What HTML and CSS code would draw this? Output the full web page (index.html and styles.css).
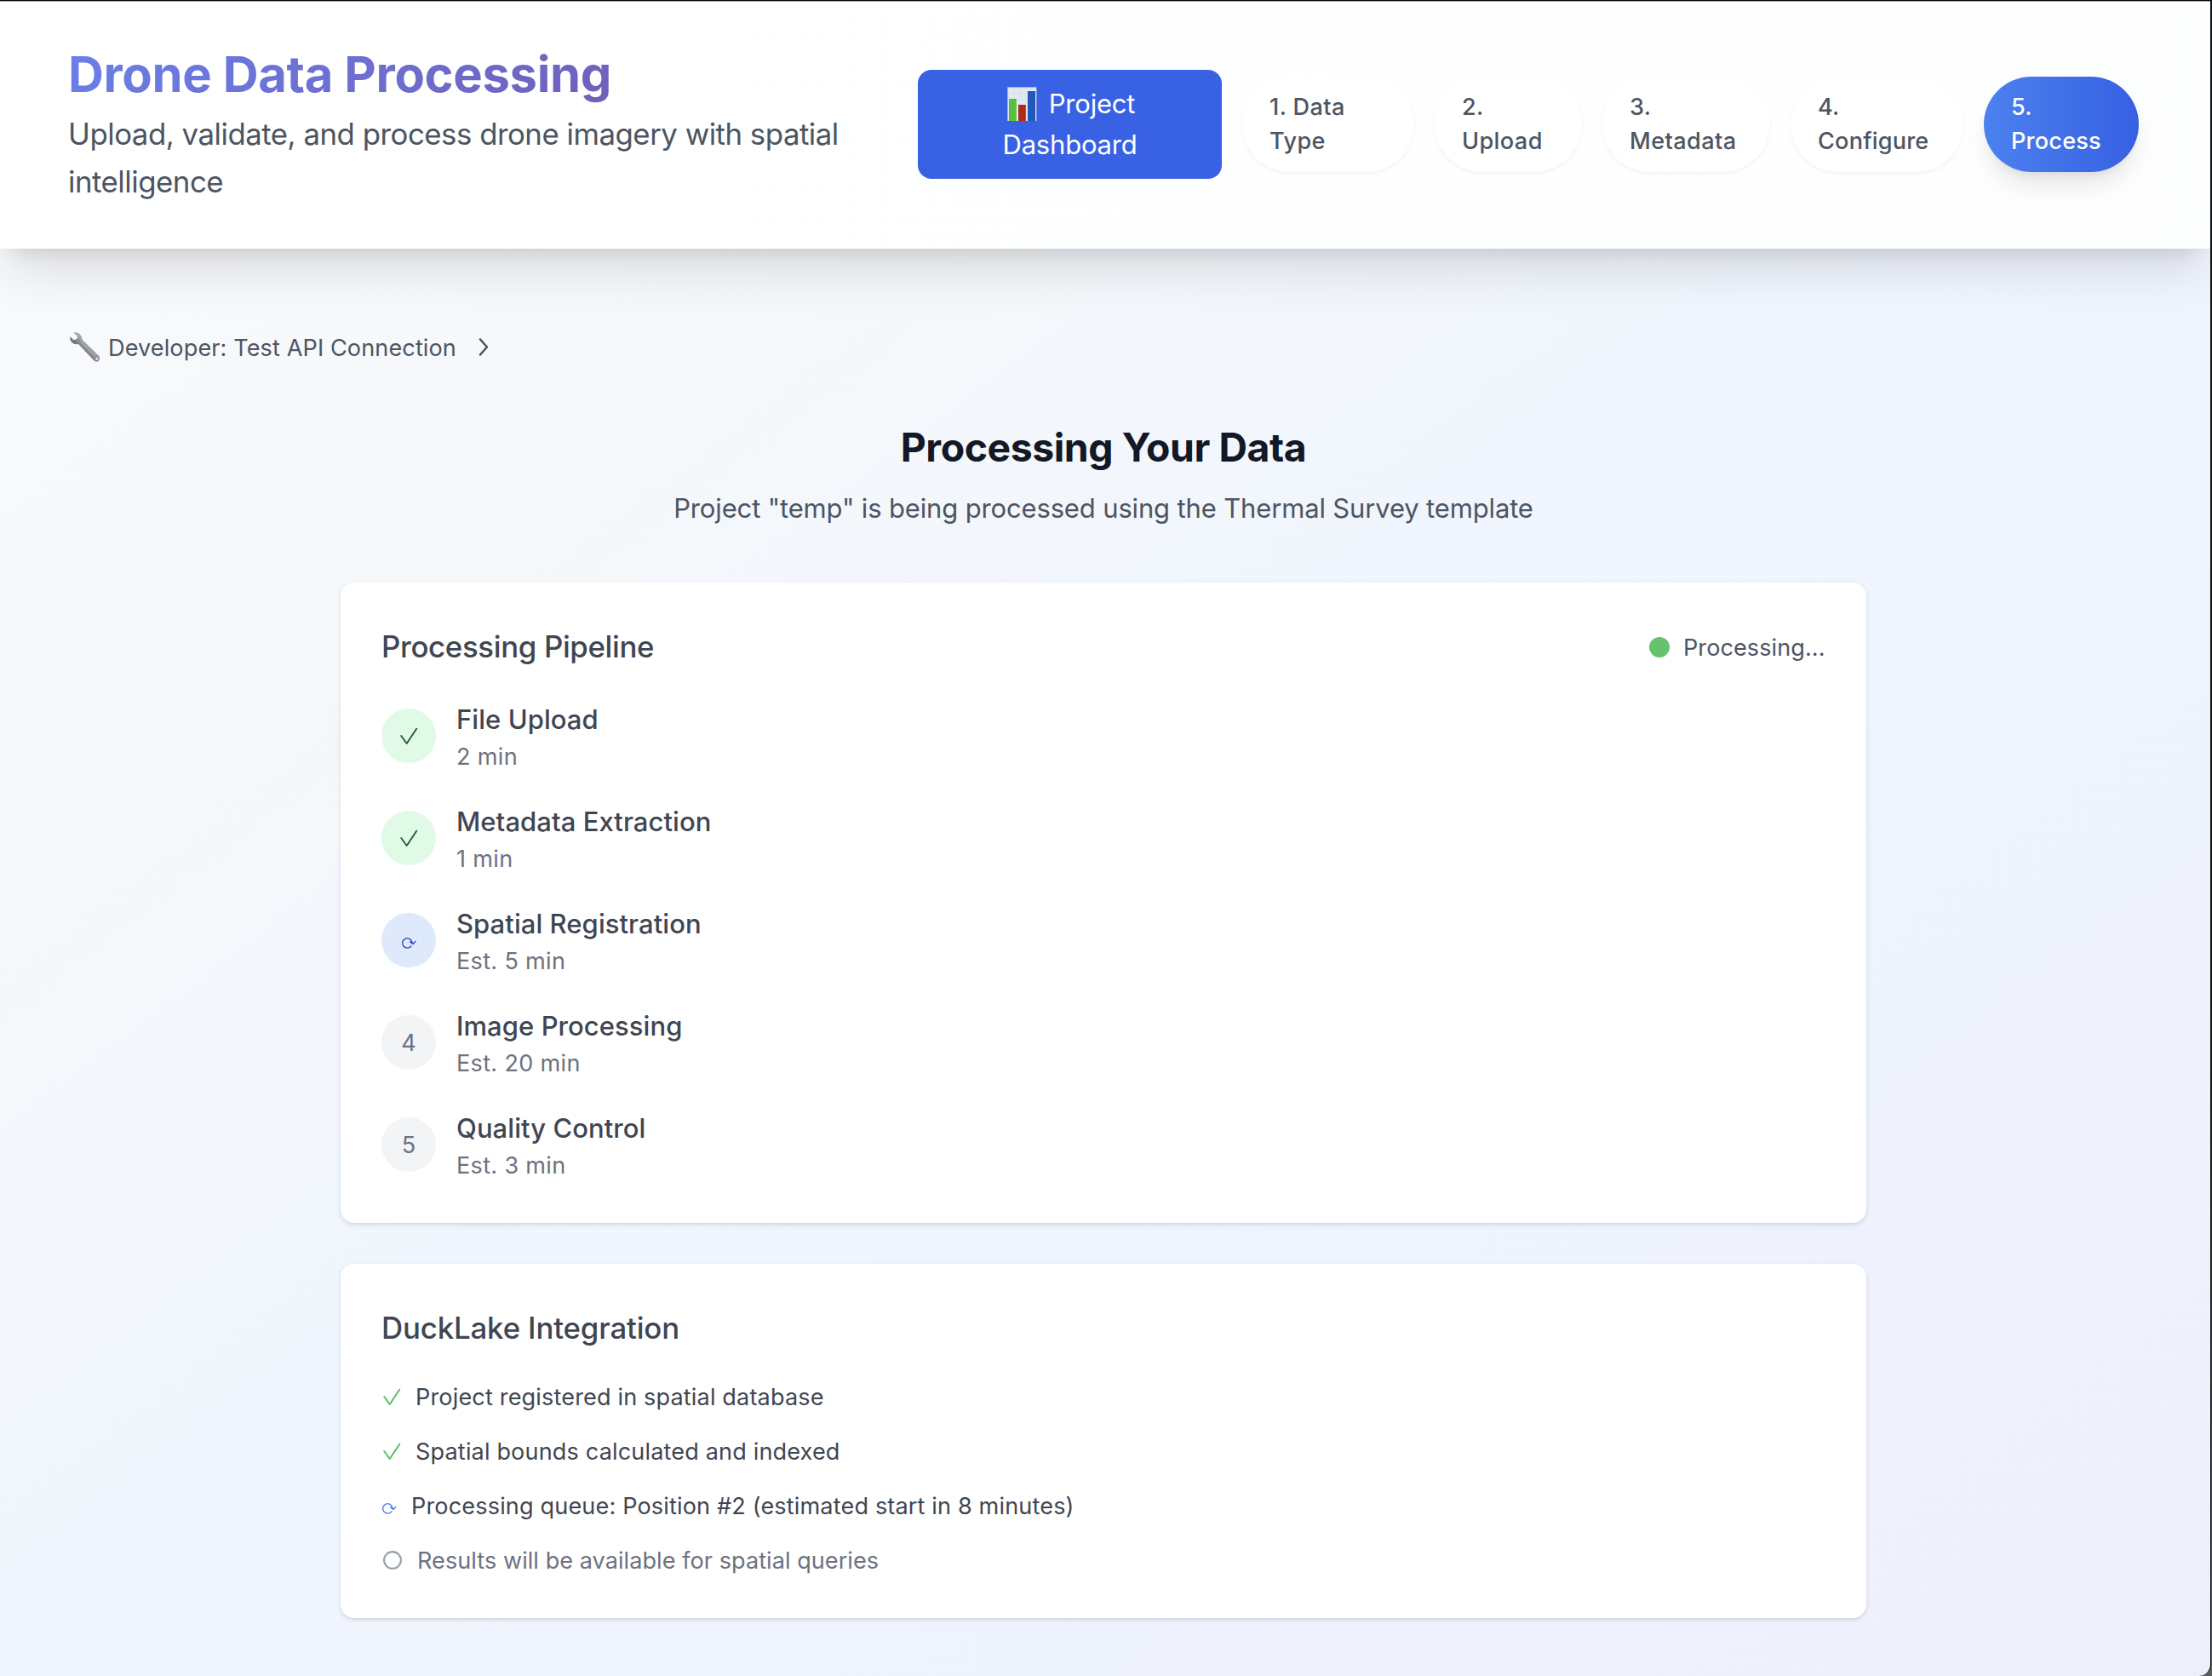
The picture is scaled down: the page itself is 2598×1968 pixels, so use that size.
FILE: index.html
```html
<!DOCTYPE html>
<html lang="en">
<head>
<meta charset="utf-8">
<title>Drone Data Processing</title>
<link rel="stylesheet" href="styles.css">
</head>
<body>
<svg class="defs" width="0" height="0" aria-hidden="true">
  <symbol id="check" viewBox="0 0 23 40"><path d="M3.2 20 9.7 29 21.2 11.7" fill="none" stroke="currentColor" stroke-width="2" stroke-linecap="round" stroke-linejoin="round"/></symbol>
  <symbol id="refresh" viewBox="0 0 18 40"><path d="M11.9 26.8A5.7 5.7 0 1 1 12.9 22.2L14 24.3M10.6 21.9 14 24.4 16.9 21.4" fill="none" stroke="currentColor" stroke-width="1.4" stroke-linecap="round" stroke-linejoin="round"/></symbol>
</svg>
<div class="window">
  <header class="header">
    <div class="brand">
      <h1>Drone Data Processing</h1>
      <p>Upload, validate, and process drone imagery with spatial intelligence</p>
    </div>
    <nav class="nav">
      <a class="dashboard"><svg class="chart" width="40" height="40" viewBox="0 0 40 40"><rect x="3.2" y=".2" width="34.3" height="39.8" fill="#b9c3da"/><rect x="4.2" y="1.2" width="32.4" height="38.8" fill="#e3e9f2"/><path d="M4 8h33M4 15h33M4 22h33M4 29h33M11 1v39M18 1v39M25 1v39M32 1v39" stroke="#d5dde9" stroke-width=".6"/><rect x="5" y="14" width="8.8" height="26" fill="#55c03c"/><rect x="16" y="21" width="8.8" height="19" fill="#b02a1c"/><rect x="27" y="5" width="9" height="35" fill="#2258b8"/></svg>Project<br>Dashboard</a>
      <a class="pill p1">1. Data<br>Type</a>
      <a class="pill p2">2.<br>Upload</a>
      <a class="pill p3">3.<br>Metadata</a>
      <a class="pill p4">4.<br>Configure</a>
      <a class="pill p5 active">5.<br>Process</a>
    </nav>
  </header>
  <main class="main">
    <div class="developer">
      <svg class="wrench" width="46" height="40" viewBox="18 24 138 120">
        <defs><linearGradient id="steel" x1="0" y1="1" x2="1" y2="0"><stop offset=".3" stop-color="#55565e"/><stop offset=".5" stop-color="#8e9199"/><stop offset=".62" stop-color="#a9adb4"/></linearGradient></defs>
        <path d="M41 30 54 33Q67 41 68 57L127 114Q133 123 126 131 118 137 109 130L55 73Q39 74 30 65 23 57 25 45L36 56Q44 59 50 52 53 44 47 40L40 35Z" fill="url(#steel)"/>
        <path d="M62 62 113 115" stroke="#b3a9ad" stroke-width="4" stroke-linecap="round"/>
        <circle cx="119" cy="124" r="4" fill="#eef0f4"/>
      </svg>
      <span>Developer: Test API Connection</span>
      <svg class="chevron" width="24" height="40" viewBox="0 0 24 40"><path d="M6 10.5 14 19.5 6 28.5" fill="none" stroke="currentColor" stroke-width="2.6" stroke-linecap="round" stroke-linejoin="round"/></svg>
    </div>
    <section class="content">
      <div class="intro">
        <h2>Processing Your Data</h2>
        <p>Project "temp" is being processed using the Thermal Survey template</p>
      </div>
      <div class="card">
        <div class="card-head">
          <h3 class="pipeline">Processing Pipeline</h3>
          <div class="status"><i class="dot"></i><span>Processing...</span></div>
        </div>
        <ol class="steps">
          <li><b class="badge done"><svg width="23" height="40"><use href="#check"/></svg></b><div><h4>File Upload</h4><p>2 min</p></div></li>
          <li><b class="badge done"><svg width="23" height="40"><use href="#check"/></svg></b><div><h4>Metadata Extraction</h4><p>1 min</p></div></li>
          <li><b class="badge running"><svg width="18" height="40"><use href="#refresh"/></svg></b><div><h4>Spatial Registration</h4><p>Est. 5 min</p></div></li>
          <li><b class="badge">4</b><div><h4>Image Processing</h4><p>Est. 20 min</p></div></li>
          <li><b class="badge">5</b><div><h4>Quality Control</h4><p>Est. 3 min</p></div></li>
        </ol>
      </div>
      <div class="card">
        <h3 class="lake">DuckLake Integration</h3>
        <ul class="checks">
          <li><svg class="green" width="23" height="40"><use href="#check"/></svg><span>Project registered in spatial database</span></li>
          <li><svg class="green" width="23" height="40"><use href="#check"/></svg><span>Spatial bounds calculated and indexed</span></li>
          <li><svg class="blue" width="18" height="40"><use href="#refresh"/></svg><span>Processing queue: Position #2 (estimated start in 8 minutes)</span></li>
          <li class="muted"><svg width="25" height="40"><circle cx="13" cy="20" r="9.9" fill="none" stroke="#9aa0ae" stroke-width="2.2"/></svg><span>Results will be available for spatial queries</span></li>
        </ul>
      </div>
    </section>
  </main>
</div>
</body>
</html>
```
FILE: styles.css
```css
* { box-sizing: border-box; margin: 0; padding: 0; }
html { background: linear-gradient(#15181a, #15181a 60%, #565d5a); }
body { font-family: Inter, "Liberation Sans", sans-serif; color: #3f4652; overflow: hidden; }
.defs { position: absolute; }
.window {
  height: 1968px;
  margin-right: 1px;
  border-top: 1px solid #000;
  border-right: 1px solid #000;
  border-bottom-right-radius: 14px;
  overflow: hidden;
  background: linear-gradient(to bottom right, #f9fafc, #f5f8fb 30%, #f0f5fe 50%, #eff3fe 75%, #eeeffc);
}

.header {
  display: flex;
  align-items: center;
  height: 291px;
  padding: 0 84px 2px 80px;
  border-top: 1px solid #a9a9a9;
  background: linear-gradient(90deg, #fff, #fdfefe);
  box-shadow: 0 40px 50px -10px rgba(0,0,0,.1), 0 16px 20px -12px rgba(0,0,0,.1);
}
.brand { width: 975px; margin-right: 24px; }
.brand h1 {
  font-size: 58px;
  line-height: 72px;
  font-weight: 700;
  letter-spacing: -.38px;
  color: transparent;
  background: linear-gradient(135deg, #6a80e8, #7350a5);
  -webkit-background-clip: text;
  background-clip: text;
}
.brand p { margin-top: 6px; font-size: 34.8px; line-height: 56px; letter-spacing: -.49px; color: #4d5562; }
.nav { display: flex; align-items: center; gap: 24px; }
.dashboard {
  width: 357px;
  padding: 16px 0;
  border-radius: 16px;
  background: #3861e4;
  color: #fff;
  font-size: 31px;
  line-height: 48px;
  letter-spacing: -.2px;
  text-align: center;
}
.chart { margin-right: 12px; vertical-align: -9px; }
.pill {
  padding: 16px 0 16px 32px;
  border-radius: 56px;
  background: #fff;
  box-shadow: 0 2px 4px rgba(0,0,0,.05);
  color: #4d5562;
  font-size: 27.1px;
  line-height: 40px;
  font-weight: 500;
  letter-spacing: .4px;
}
.p1 { width: 202px; }
.p2 { width: 173px; }
.p3 { width: 197px; }
.p4 { width: 203px; letter-spacing: .2px; }
.p5 { width: 182px; }
.active {
  background: linear-gradient(90deg, #4c81ef, #3660e2);
  box-shadow: 0 20px 30px -6px rgba(0,0,0,.1), 0 8px 12px -8px rgba(0,0,0,.1);
  color: #fff;
  letter-spacing: .2px;
}

.main { padding: 96px 4px 0 0; }
.developer {
  display: flex;
  padding-left: 80px;
  font-size: 27.1px;
  line-height: 40px;
  letter-spacing: .1px;
  color: #4d5562;
}
.developer span { margin: 1px 0 -1px 1px; }
.chevron { margin-left: 22px; }
.content { width: 1792px; margin: 64px auto 0; }
.intro { text-align: center; margin-bottom: 63px; padding-top: 1px; }
.intro h2 { font-size: 46.4px; line-height: 64px; font-weight: 700; letter-spacing: -.45px; color: #121826; }
.intro p { margin-top: 16px; font-size: 31px; line-height: 48px; letter-spacing: -.15px; color: #4d5562; }

.card {
  padding: 48px;
  margin-bottom: 48px;
  border-radius: 16px;
  background: #fff;
  box-shadow: 0 2px 6px rgba(0,0,0,.1), 0 2px 4px -2px rgba(0,0,0,.1);
}
.card h3 { font-size: 34.8px; line-height: 56px; font-weight: 500; }
.card .pipeline { margin: -1px 0 1px; letter-spacing: -.34px; }
.card .lake { margin: -1px 0 33px; letter-spacing: -.15px; }
.card-head { display: flex; align-items: center; justify-content: space-between; }
.status { display: flex; align-items: center; gap: 16px; width: 207px; font-size: 27.1px; line-height: 40px; letter-spacing: .06px; color: #4d5562; white-space: nowrap; }
.status span { margin: 1px 0 -1px; }
.dot { width: 24px; height: 24px; border-radius: 50%; background: #65c36f; }
.steps { display: grid; gap: 32px; margin-top: 32px; list-style: none; }
.steps li { display: flex; align-items: center; gap: 24px; }
.steps div { margin: 1px 0 -1px; }
.badge {
  display: flex;
  align-items: center;
  justify-content: center;
  width: 64px;
  height: 64px;
  border-radius: 50%;
  background: #f3f4f6;
  color: #6d7280;
  font-size: 27.1px;
  font-weight: 400;
}
.done { background: #e1fae7; color: #2c6236; }
.done svg { margin-right: 2px; }
.running { background: #dee9fb; color: #3049b5; }
.steps h4 { font-size: 31px; line-height: 48px; font-weight: 500; letter-spacing: .06px; }
.steps p { font-size: 27.1px; line-height: 40px; letter-spacing: .3px; color: #6d7280; }
.checks { display: grid; gap: 24px; list-style: none; font-size: 27.1px; line-height: 40px; letter-spacing: .14px; }
.checks li { display: flex; gap: 17px; }
.checks span { margin: 1px 0 -1px; }
.green { color: #58bf63; }
.blue { color: #4c81ef; }
.muted { color: #6d7280; letter-spacing: .04px; }
```
